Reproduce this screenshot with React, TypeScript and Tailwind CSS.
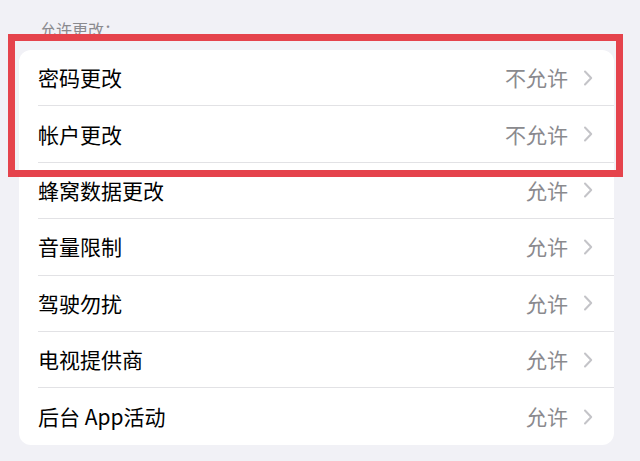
import React from "react";

const rows: { label: string; value: string }[] = [
  { label: "密码更改", value: "不允许" },
  { label: "帐户更改", value: "不允许" },
  { label: "蜂窝数据更改", value: "允许" },
  { label: "音量限制", value: "允许" },
  { label: "驾驶勿扰", value: "允许" },
  { label: "电视提供商", value: "允许" },
  { label: "后台 App活动", value: "允许" },
];

function Chevron() {
  return (
    <svg width="10" height="16" viewBox="0 0 10 16" fill="none" className="shrink-0">
      <path d="M2 1.5 L8.2 8 L2 14.5" stroke="#c4c4c8" strokeWidth="2" strokeLinecap="round" strokeLinejoin="round" />
    </svg>
  );
}

export default function App() {
  return (
    <div
      className="relative w-[640px] h-[461px] overflow-hidden bg-[#f1f1f6]"
      style={{ fontFamily: '"Noto Sans CJK SC", "Noto Sans", sans-serif' }}
    >
      <div className="pt-[19px] pl-[40px] h-[50px] text-[16px] leading-[20px] text-[#8a8a8e]">允许更改：</div>
      <div className="ml-[19px] w-[595px] bg-white rounded-[12px] overflow-hidden">
        {rows.map((r, i) => (
          <div key={i} className="h-[56.4px] flex">
            <div
              className={
                "ml-[19px] flex-1 flex items-center pr-[21px] " +
                (i < rows.length - 1 ? "border-b border-[#e2e2e5]" : "")
              }
            >
              <span className="flex-1 text-[21px] text-black leading-none">{r.label}</span>
              <span className="text-[21px] text-[#8a8a8e] leading-none mr-[15px]">{r.value}</span>
              <Chevron />
            </div>
          </div>
        ))}
      </div>
      <div className="absolute left-[8px] top-[34px] w-[615px] h-[143px] border-[7px] border-[#e5434c] pointer-events-none" />
    </div>
  );
}
